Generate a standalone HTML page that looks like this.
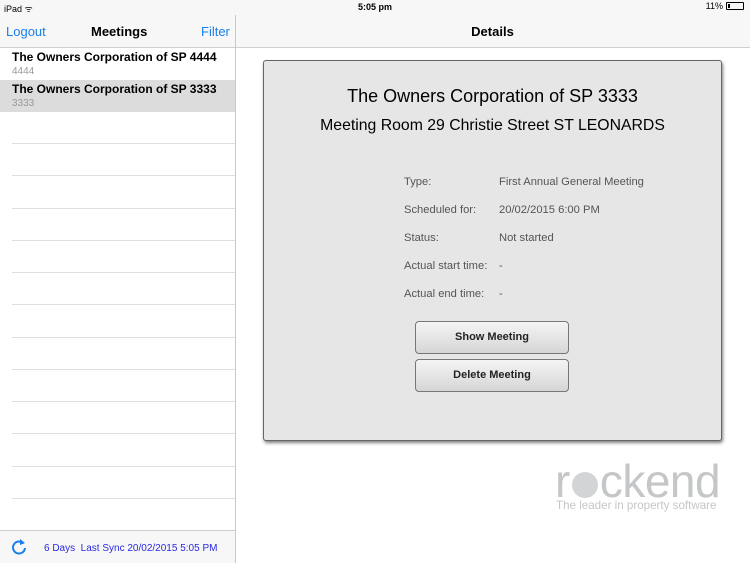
<!DOCTYPE html>
<html><head><style>
*{margin:0;padding:0;box-sizing:border-box}
body{width:750px;height:563px;overflow:hidden;background:#fff;font-family:"Liberation Sans",Helvetica,sans-serif;position:relative}
.abs{position:absolute}
.top{left:0;top:0;width:750px;height:48px;background:#f7f7f7;border-bottom:1px solid #d0d0d0}
.sep{left:12px;width:223px;height:1px;background:#e0e0e0}
.lbl{left:404px;font-size:11.2px;color:#555}
.val{left:499px;font-size:11.2px;color:#555}
.btn{left:415px;width:154px;height:33px;border:1px solid #777;border-radius:4px;background:linear-gradient(#f4f4f4,#d6d6d6);font-size:11px;font-weight:bold;color:#222;text-align:center;line-height:31px}
</style></head><body>
<div class="abs top"></div>
<div class="abs" style="left:4px;top:2px;font-size:9px;color:#000">iPad ᯤ</div>
<div class="abs" style="left:0;top:2px;width:750px;text-align:center;font-size:9px;font-weight:bold">5:05 pm</div>
<div class="abs" style="right:6px;top:1px;font-size:9px;display:flex;align-items:center;gap:3px">11% <span style="display:inline-block;width:18px;height:8px;border:1px solid #000;border-radius:1px;position:relative"><span style="position:absolute;left:1px;top:1px;width:2px;height:4px;background:#000"></span></span></div>
<div class="abs" style="left:6px;top:24px;font-size:13px;color:#1a7fe8">Logout</div>
<div class="abs" style="left:91px;top:24px;font-size:13px;font-weight:bold">Meetings</div>
<div class="abs" style="left:201px;top:24px;font-size:13px;color:#1a7fe8">Filter</div>
<div class="abs" style="left:0;top:24px;width:985px;text-align:center;font-size:13px;font-weight:bold">Details</div>
<div class="abs" style="left:235px;top:15px;width:1px;height:548px;background:#c8c8c8"></div>
<div class="abs" style="left:0;top:80px;width:235px;height:32px;background:#dcdcdc"></div>
<div class="abs" style="left:12px;top:50px;font-size:12px;font-weight:bold">The Owners Corporation of SP 4444</div>
<div class="abs" style="left:12px;top:66px;font-size:10px;color:#999">4444</div>
<div class="abs" style="left:12px;top:82px;font-size:12px;font-weight:bold">The Owners Corporation of SP 3333</div>
<div class="abs" style="left:12px;top:98px;font-size:10px;color:#999">3333</div>
<div class="abs sep" style="top:143px"></div><div class="abs sep" style="top:175px"></div><div class="abs sep" style="top:208px"></div><div class="abs sep" style="top:240px"></div><div class="abs sep" style="top:272px"></div><div class="abs sep" style="top:304px"></div><div class="abs sep" style="top:337px"></div><div class="abs sep" style="top:369px"></div><div class="abs sep" style="top:401px"></div><div class="abs sep" style="top:433px"></div><div class="abs sep" style="top:466px"></div><div class="abs sep" style="top:498px"></div>
<div class="abs" style="left:0;top:530px;width:235px;height:33px;background:#f7f7f7;border-top:1px solid #ccc"></div>
<svg class="abs" style="left:10px;top:538px" width="18" height="18" viewBox="0 0 18 18"><path d="M13.5 5.5A6 6 0 1 0 15 10" fill="none" stroke="#1a7fe8" stroke-width="2"/><path d="M10 1l5 4-5 2z" fill="#1a7fe8"/></svg>
<div class="abs" style="left:44px;top:543px;font-size:10px;color:#2a2ae0">6 Days&nbsp; Last Sync 20/02/2015 5:05 PM</div>
<div class="abs" style="left:263px;top:60px;width:459px;height:381px;background:#e6e6e6;border:1px solid #666;border-radius:3px;box-shadow:1px 2px 3px rgba(0,0,0,.5)"></div>
<div class="abs" style="left:263px;top:86px;width:459px;text-align:center;font-size:18px">The Owners Corporation of SP 3333</div>
<div class="abs" style="left:263px;top:117px;width:459px;text-align:center;font-size:15.8px">Meeting Room 29 Christie Street ST LEONARDS</div>
<div class="abs lbl" style="top:176px">Type:</div><div class="abs val" style="top:176px">First Annual General Meeting</div>
<div class="abs lbl" style="top:204px">Scheduled for:</div><div class="abs val" style="top:204px">20/02/2015 6:00 PM</div>
<div class="abs lbl" style="top:232px">Status:</div><div class="abs val" style="top:232px">Not started</div>
<div class="abs lbl" style="top:260px">Actual start time:</div><div class="abs val" style="top:260px">-</div>
<div class="abs lbl" style="top:288px">Actual end time:</div><div class="abs val" style="top:288px">-</div>
<div class="abs btn" style="top:321px">Show Meeting</div>
<div class="abs btn" style="top:359px">Delete Meeting</div>
<div class="abs" style="left:555px;top:458px;font-size:46px;letter-spacing:-0.5px;color:#c4c6c8;line-height:46px;white-space:nowrap">r<span style="display:inline-block;width:26px;height:26px;border-radius:50%;background:#d2d4d6;vertical-align:-1px;margin:0 2px"></span>ckend</div>
<div class="abs" style="left:556px;top:499px;font-size:11.6px;color:#c4c6c8;white-space:nowrap">The leader in property software</div>
</body></html>
